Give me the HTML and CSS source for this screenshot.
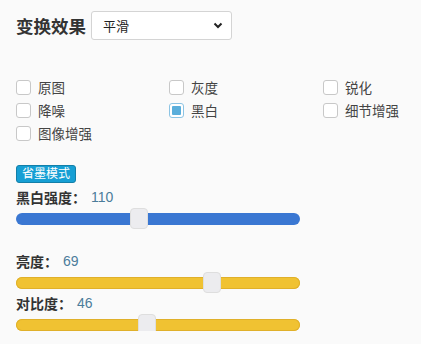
FILE: index.html
```html
<!DOCTYPE html>
<html lang="zh">
<head>
<meta charset="utf-8">
<link rel="stylesheet" href="styles.css">
</head>
<body>
<div class="panel">
  <div class="head">
    <h2 class="title">变换效果</h2>
    <div class="select"><span>平滑</span>
      <svg class="chev" width="10" height="7" viewBox="0 0 10 7"><path d="M1.5 1.5 L5 5 L8.5 1.5" fill="none" stroke="#222" stroke-width="2"/></svg>
    </div>
  </div>
  <div class="checks">
    <label class="ck"><span class="box"></span>原图</label>
    <label class="ck"><span class="box"></span>灰度</label>
    <label class="ck"><span class="box"></span>锐化</label>
    <label class="ck"><span class="box"></span>降噪</label>
    <label class="ck"><span class="box on"></span>黑白</label>
    <label class="ck"><span class="box"></span>细节增强</label>
    <label class="ck"><span class="box"></span>图像增强</label>
  </div>
  <div class="badge">省墨模式</div>
  <div class="field">
    <div class="lbl"><b>黑白强度：</b><span class="val">110</span></div>
    <div class="track blue"><span class="thumb" style="left:114px"></span></div>
  </div>
  <div class="field f2">
    <div class="lbl"><b>亮度：</b><span class="val">69</span></div>
    <div class="track yellow"><span class="thumb" style="left:187px"></span></div>
  </div>
  <div class="field f3">
    <div class="lbl"><b>对比度：</b><span class="val">46</span></div>
    <div class="track yellow"><span class="thumb" style="left:122px"></span></div>
  </div>
</div>
</body>
</html>
```
FILE: styles.css
```css
html, body { margin: 0; padding: 0; background: #fafafa; }
body { font-family: "Liberation Sans", "Noto Sans CJK SC", sans-serif; color: #333; font-size: 13px; }
.panel { padding: 11px 16px 0 16px; }
.head { display: flex; align-items: center; gap: 5px; height: 28px; }
.title { margin: 0; font-size: 17.5px; font-weight: bold; color: #333; white-space: nowrap; }
.select { box-sizing: border-box; width: 141px; height: 29px; border: 1px solid #d4d4d4; border-radius: 3px; background: #fff; display: flex; align-items: center; justify-content: space-between; padding: 0 8px 0 11px; font-size: 13px; color: #222; flex-shrink: 0; }
.chev { display: block; }
.checks { margin-top: 40px; display: grid; grid-template-columns: 153px 154px 1fr; row-gap: 7px; }
.ck { display: flex; align-items: center; gap: 7px; height: 16px; font-size: 13.5px; color: #444; white-space: nowrap; }
.box { box-sizing: border-box; width: 15px; height: 15px; border: 1px solid #c8c8c8; border-radius: 3px; background: #fff; }
.box.on { border-color: #8cc4e4; background: #fff; position: relative; }
.box.on::after { content: ""; position: absolute; left: 2px; top: 2px; width: 9px; height: 9px; border-radius: 1px; background: #5aaedb; }
.badge { display: inline-block; margin-top: 24px; height: 18px; line-height: 16px; box-sizing: border-box; padding: 0 5px; font-size: 12px; color: #fff; background: #169fd4; border: 1px solid #137fa8; border-radius: 3px; }
.field { margin-top: 5px; }
.lbl { display: flex; align-items: center; height: 17px; font-size: 14px; }
.lbl b { color: #333; font-weight: bold; }
.val { color: #4b7c9a; margin-left: 5px; font-size: 14px; }
.track { position: relative; margin-top: 8px; height: 12px; border-radius: 6px; width: 284px; }
.track.blue { background: #3a77d2; }
.track.yellow { background: #f0c232; box-shadow: inset 0 0 0 1px #e0b02a; }
.thumb { position: absolute; top: -5px; width: 18px; height: 21px; box-sizing: border-box; border-radius: 4px; background: #ececef; border: 1px solid #dedede; }
.f2 { margin-top: 27px; }
.f3 { margin-top: 5px; }
```
